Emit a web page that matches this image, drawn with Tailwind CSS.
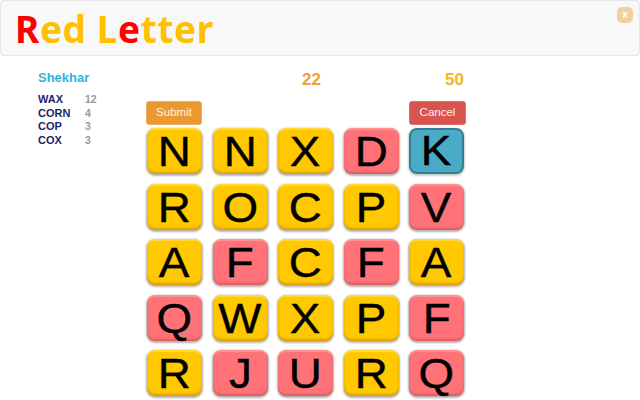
<!DOCTYPE html>
<html lang="en">
  <head>
    <meta charset="UTF-8" />
    <title>Red Letter</title>
    <script src="https://cdn.jsdelivr.net/npm/@tailwindcss/browser@4"></script>
  </head>
  <body class="bg-white w-[640px] h-[400px] overflow-hidden font-['Liberation_Sans',sans-serif]">
    <header class="relative h-[56px] bg-[#f8f8f8] border border-[#e7e7e7] rounded-[4px] pl-[14px] pt-[3px]">
      <h1 class="font-['Noto_Sans',sans-serif] font-bold text-[37px] tracking-[0.6px] leading-[50px] text-[#ffc000]"><span class="text-[#ff0000]">R</span>ed L<span class="text-[#ff0000]">e</span>tter</h1>
      <button class="absolute right-[6px] top-[6px] w-4 h-4 rounded-[5px] bg-[#f3d19e] text-white text-[10px] leading-4 font-bold text-center">x</button>
    </header>
    <div class="flex">
      <aside class="w-[146px] pl-[38px] pt-[14px] shrink-0">
        <div class="text-[#2fb2de] text-[13px] font-bold leading-[15px]">Shekhar</div>
        <table class="mt-[8px] text-[11px] font-bold">
          <tbody>
            <tr class="h-[13.5px] leading-[13px]"><td class="text-[#1f1f6e] w-[47px] p-0">WAX</td><td class="text-[#999999] text-[10.5px] p-0">12</td></tr>
            <tr class="h-[13.5px] leading-[13px]"><td class="text-[#1f1f6e] p-0">CORN</td><td class="text-[#999999] text-[10.5px] p-0">4</td></tr>
            <tr class="h-[13.5px] leading-[13px]"><td class="text-[#1f1f6e] p-0">COP</td><td class="text-[#999999] text-[10.5px] p-0">3</td></tr>
            <tr class="h-[13.5px] leading-[13px]"><td class="text-[#1f1f6e] p-0">COX</td><td class="text-[#999999] text-[10.5px] p-0">3</td></tr>
          </tbody>
        </table>
      </aside>
      <main class="w-[320px]">
        <div class="flex h-[45px] pt-[15px] text-[17px] font-bold leading-[18px]">
          <div class="w-[175px] text-right text-[#f0a040]">22</div>
          <div class="w-[143px] text-right text-[#f5b51b]">50</div>
        </div>
        <div class="flex justify-between h-[27px]">
          <button class="w-[56px] h-[24px] bg-[#ea982f] border border-[#eeb060] rounded-[3px] text-[#fdf3e4] text-[11.5px]">Submit</button>
          <button class="w-[57px] h-[24px] bg-[#d9534f] border border-[#e06c68] rounded-[3px] text-[#fdf0f0] text-[11.5px]">Cancel</button>
        </div>
        <div class="grid grid-cols-[repeat(5,55px)] auto-rows-[46px] gap-x-[10.5px] gap-y-[9.6px] pl-px text-[42px] leading-[44px] [-webkit-text-stroke:0.4px_black] text-black text-center *:*:inline-block *:*:scale-x-[1.09]">
          <div class="rounded-[8px] bg-[#ffc800] border-t-2 border-[#ffd835] shadow-[0_1px_2px_1px_rgba(0,0,0,0.3),inset_0_-2px_2px_rgba(190,120,0,0.5)]"><span>N</span></div>
          <div class="rounded-[8px] bg-[#ffc800] border-t-2 border-[#ffd835] shadow-[0_1px_2px_1px_rgba(0,0,0,0.3),inset_0_-2px_2px_rgba(190,120,0,0.5)]"><span>N</span></div>
          <div class="rounded-[8px] bg-[#ffc800] border-t-2 border-[#ffd835] shadow-[0_1px_2px_1px_rgba(0,0,0,0.3),inset_0_-2px_2px_rgba(190,120,0,0.5)]"><span>X</span></div>
          <div class="rounded-[8px] bg-[#ff7378] border-t-2 border-[#ff9094] shadow-[0_1px_2px_1px_rgba(0,0,0,0.3),inset_0_-2px_2px_rgba(190,70,70,0.5)]"><span>D</span></div>
          <div class="rounded-[8px] bg-[#49abc6] border-2 border-[#337f94] leading-[42px] shadow-[0_1px_2px_1px_rgba(0,0,0,0.2)]"><span>K</span></div>

          <div class="rounded-[8px] bg-[#ffc800] border-t-2 border-[#ffd835] shadow-[0_1px_2px_1px_rgba(0,0,0,0.3),inset_0_-2px_2px_rgba(190,120,0,0.5)]"><span>R</span></div>
          <div class="rounded-[8px] bg-[#ffc800] border-t-2 border-[#ffd835] shadow-[0_1px_2px_1px_rgba(0,0,0,0.3),inset_0_-2px_2px_rgba(190,120,0,0.5)]"><span>O</span></div>
          <div class="rounded-[8px] bg-[#ffc800] border-t-2 border-[#ffd835] shadow-[0_1px_2px_1px_rgba(0,0,0,0.3),inset_0_-2px_2px_rgba(190,120,0,0.5)]"><span>C</span></div>
          <div class="rounded-[8px] bg-[#ffc800] border-t-2 border-[#ffd835] shadow-[0_1px_2px_1px_rgba(0,0,0,0.3),inset_0_-2px_2px_rgba(190,120,0,0.5)]"><span>P</span></div>
          <div class="rounded-[8px] bg-[#ff7378] border-t-2 border-[#ff9094] shadow-[0_1px_2px_1px_rgba(0,0,0,0.3),inset_0_-2px_2px_rgba(190,70,70,0.5)]"><span>V</span></div>

          <div class="rounded-[8px] bg-[#ffc800] border-t-2 border-[#ffd835] shadow-[0_1px_2px_1px_rgba(0,0,0,0.3),inset_0_-2px_2px_rgba(190,120,0,0.5)]"><span>A</span></div>
          <div class="rounded-[8px] bg-[#ff7378] border-t-2 border-[#ff9094] shadow-[0_1px_2px_1px_rgba(0,0,0,0.3),inset_0_-2px_2px_rgba(190,70,70,0.5)]"><span>F</span></div>
          <div class="rounded-[8px] bg-[#ffc800] border-t-2 border-[#ffd835] shadow-[0_1px_2px_1px_rgba(0,0,0,0.3),inset_0_-2px_2px_rgba(190,120,0,0.5)]"><span>C</span></div>
          <div class="rounded-[8px] bg-[#ff7378] border-t-2 border-[#ff9094] shadow-[0_1px_2px_1px_rgba(0,0,0,0.3),inset_0_-2px_2px_rgba(190,70,70,0.5)]"><span>F</span></div>
          <div class="rounded-[8px] bg-[#ffc800] border-t-2 border-[#ffd835] shadow-[0_1px_2px_1px_rgba(0,0,0,0.3),inset_0_-2px_2px_rgba(190,120,0,0.5)]"><span>A</span></div>

          <div class="rounded-[8px] bg-[#ff7378] border-t-2 border-[#ff9094] shadow-[0_1px_2px_1px_rgba(0,0,0,0.3),inset_0_-2px_2px_rgba(190,70,70,0.5)]"><span>Q</span></div>
          <div class="rounded-[8px] bg-[#ffc800] border-t-2 border-[#ffd835] shadow-[0_1px_2px_1px_rgba(0,0,0,0.3),inset_0_-2px_2px_rgba(190,120,0,0.5)]"><span>W</span></div>
          <div class="rounded-[8px] bg-[#ffc800] border-t-2 border-[#ffd835] shadow-[0_1px_2px_1px_rgba(0,0,0,0.3),inset_0_-2px_2px_rgba(190,120,0,0.5)]"><span>X</span></div>
          <div class="rounded-[8px] bg-[#ffc800] border-t-2 border-[#ffd835] shadow-[0_1px_2px_1px_rgba(0,0,0,0.3),inset_0_-2px_2px_rgba(190,120,0,0.5)]"><span>P</span></div>
          <div class="rounded-[8px] bg-[#ff7378] border-t-2 border-[#ff9094] shadow-[0_1px_2px_1px_rgba(0,0,0,0.3),inset_0_-2px_2px_rgba(190,70,70,0.5)]"><span>F</span></div>

          <div class="rounded-[8px] bg-[#ffc800] border-t-2 border-[#ffd835] shadow-[0_1px_2px_1px_rgba(0,0,0,0.3),inset_0_-2px_2px_rgba(190,120,0,0.5)]"><span>R</span></div>
          <div class="rounded-[8px] bg-[#ff7378] border-t-2 border-[#ff9094] shadow-[0_1px_2px_1px_rgba(0,0,0,0.3),inset_0_-2px_2px_rgba(190,70,70,0.5)]"><span>J</span></div>
          <div class="rounded-[8px] bg-[#ff7378] border-t-2 border-[#ff9094] shadow-[0_1px_2px_1px_rgba(0,0,0,0.3),inset_0_-2px_2px_rgba(190,70,70,0.5)]"><span>U</span></div>
          <div class="rounded-[8px] bg-[#ffc800] border-t-2 border-[#ffd835] shadow-[0_1px_2px_1px_rgba(0,0,0,0.3),inset_0_-2px_2px_rgba(190,120,0,0.5)]"><span>R</span></div>
          <div class="rounded-[8px] bg-[#ff7378] border-t-2 border-[#ff9094] shadow-[0_1px_2px_1px_rgba(0,0,0,0.3),inset_0_-2px_2px_rgba(190,70,70,0.5)]"><span>Q</span></div>
        </div>
      </main>
    </div>
  </body>
</html>
